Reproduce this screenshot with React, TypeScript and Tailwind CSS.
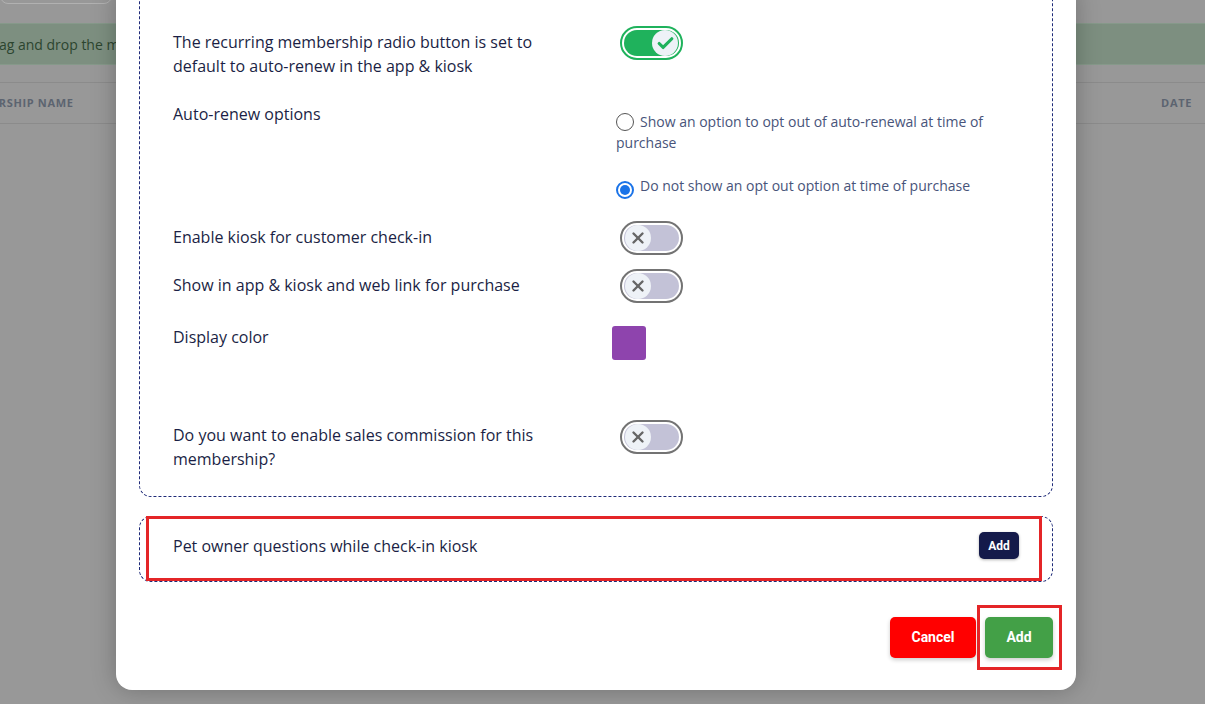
import { Check, X } from 'lucide-react';

const label = 'font-["Open_Sans",sans-serif] text-[16px] leading-[24px] font-medium text-[#1b1f45]';

function Toggle({ on }: { on: boolean }) {
  return (
    <div
      className={`w-[63px] h-[34px] rounded-full border-2 p-[2px] bg-white ${
        on ? 'border-[#1fb25c]' : 'border-[#737373]'
      }`}
    >
      <div
        className={`h-full rounded-full flex items-center px-[1px] ${
          on ? 'bg-[#1fb25c] justify-end' : 'bg-[#c3c2d7] justify-start'
        }`}
      >
        <div className="w-[26px] h-[26px] rounded-full bg-[#eef2f7] flex items-center justify-center">
          {on ? (
            <Check size={19} strokeWidth={4} className="text-[#1fb25c]" />
          ) : (
            <X size={18} strokeWidth={3.2} className="text-[#666]" />
          )}
        </div>
      </div>
    </div>
  );
}

function Radio({ checked }: { checked: boolean }) {
  return (
    <span
      className={`inline-flex align-[-4px] mr-[6px] w-[18px] h-[18px] rounded-full items-center justify-center bg-white ${
        checked ? 'border-2 border-[#1a73e8]' : 'border border-[#555]'
      }`}
    >
      {checked && <span className="w-[10px] h-[10px] rounded-full bg-[#1a73e8]" />}
    </span>
  );
}

export default function App() {
  return (
    <div className="relative h-[704px] w-[1205px] overflow-hidden bg-[#989898] font-['Open_Sans',sans-serif]">
      {/* page behind the dialog */}
      <div className="flex flex-col">
        <div className="h-[23px] relative">
          <div className="absolute left-0 -top-[20px] w-[112px] h-[24px] rounded-[8px] border border-[#b1b1b1]" />
        </div>
        <div className="h-[42px] bg-[#7d8f80] border-y border-[#86998a] flex items-center overflow-hidden">
          <span className="-ml-[17px] whitespace-nowrap text-[14px] text-[#2c452f]">
            Drag and drop the memberships to change the display order
          </span>
        </div>
        <div className="h-[17px]" />
        <div className="h-[42px] border-y border-[#8b8b8b] flex items-center justify-between overflow-hidden">
          <span className="-ml-[45px] whitespace-nowrap text-[11px] font-bold tracking-[0.06em] text-[#5c6470]">
            MEMBERSHIP NAME
          </span>
          <span className="mr-[13px] text-[11px] font-bold tracking-[0.06em] text-[#5c6470]">DATE</span>
        </div>
      </div>

      {/* dialog */}
      <div className="absolute left-[116px] bottom-[14px] w-[960px] bg-white rounded-[16px] px-[23px] pb-[32px] shadow-[0_0_24px_rgba(0,0,0,0.25)]">
        <div className="border border-dashed border-[#1e2a78] rounded-[12px] pl-[33px] pt-[40px] pb-[25px]">
          {/* row 1 */}
          <div className="flex items-start">
            <div className="w-[443px] pt-[4px]">
              <p className={`${label} w-[400px]`}>
                The recurring membership radio button is set to default to auto-renew in the app &amp; kiosk
              </p>
            </div>
            <div className="ml-[4px]">
              <Toggle on />
            </div>
          </div>

          {/* row 2 */}
          <div className="flex items-start mt-[24px]">
            <div className="w-[443px]">
              <p className={label}>Auto-renew options</p>
            </div>
            <div className="w-[390px] pt-[9px] text-[14px] leading-[21px] text-[#48547a]">
              <p>
                <Radio checked={false} />
                Show an option to opt out of auto-renewal at time of purchase
              </p>
              <p className="mt-[22px]">
                <Radio checked />
                Do not show an opt out option at time of purchase
              </p>
            </div>
          </div>

          {/* row 3 */}
          <div className="flex items-start mt-[22px]">
            <div className="w-[443px] pt-[4px]">
              <p className={label}>Enable kiosk for customer check-in</p>
            </div>
            <div className="ml-[4px]">
              <Toggle on={false} />
            </div>
          </div>

          {/* row 4 */}
          <div className="flex items-start mt-[14px]">
            <div className="w-[443px] pt-[4px]">
              <p className={label}>Show in app &amp; kiosk and web link for purchase</p>
            </div>
            <div className="ml-[4px]">
              <Toggle on={false} />
            </div>
          </div>

          {/* row 5 */}
          <div className="flex items-start mt-[22px]">
            <div className="w-[443px]">
              <p className={label}>Display color</p>
            </div>
            <div className="-ml-[4px] mt-[1px] w-[34px] h-[34px] rounded-[3px] bg-[#8e44ad]" />
          </div>

          {/* row 6 */}
          <div className="flex items-start mt-[60px]">
            <div className="w-[443px] pt-[3px]">
              <p className={`${label} w-[400px]`}>
                Do you want to enable sales commission for this membership?
              </p>
            </div>
            <div className="ml-[4px]">
              <Toggle on={false} />
            </div>
          </div>
        </div>

        <div className="relative mt-[19px] h-[66px] border border-dashed border-[#1e2a78] rounded-[12px] pl-[33px] pr-[33px] pb-[7px] flex items-center justify-between">
          <p className={label}>Pet owner questions while check-in kiosk</p>
          <button className="h-[27px] w-[40px] rounded-[5px] bg-[#141a4a] text-white text-[12px] font-bold font-['Roboto',sans-serif] shadow-[0_1px_3px_rgba(0,0,0,0.3)]">
            Add
          </button>
          <div className="absolute left-[6px] right-[10px] -top-px bottom-0 border-[3px] border-[#e42527] pointer-events-none" />
        </div>

        <div className="mt-[35px] flex justify-end gap-[9px]">
          <button className="h-[41px] w-[86px] rounded-[5px] bg-[#ff0000] text-white text-[14px] font-bold font-['Roboto',sans-serif] shadow-[0_2px_4px_rgba(0,0,0,0.2)]">
            Cancel
          </button>
          <div className="relative">
            <button className="h-[41px] w-[68px] rounded-[5px] bg-[#43a047] text-white text-[14px] font-bold font-['Roboto',sans-serif] shadow-[0_2px_4px_rgba(0,0,0,0.2)]">
              Add
            </button>
            <div className="absolute -left-[8px] -right-[9px] -top-[12px] -bottom-[12px] border-[3px] border-[#e42527] pointer-events-none" />
          </div>
        </div>
      </div>
    </div>
  );
}
